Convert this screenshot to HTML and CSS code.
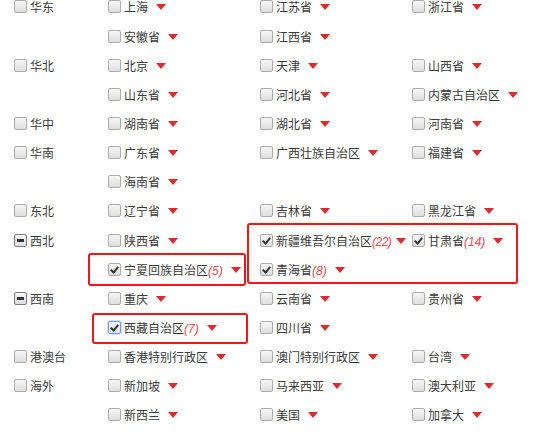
FILE: index.html
```html
<!DOCTYPE html>
<html lang="zh-CN">
<head>
    <meta charset="UTF-8">
    <meta name="viewport" content="width=device-width, initial-scale=1.0">
    <title>地区选择</title>
    <link rel="stylesheet" href="styles.css">
</head>
<body>
    <div class="area-list">
        <div class="area">
            <label class="region"><input type="checkbox"><span>华东</span></label>
            <div class="provinces">
                <label class="prov"><input type="checkbox"><span>上海</span><i class="arrow"></i></label>
                <label class="prov"><input type="checkbox"><span>江苏省</span><i class="arrow"></i></label>
                <label class="prov"><input type="checkbox"><span>浙江省</span><i class="arrow"></i></label>
                <label class="prov"><input type="checkbox"><span>安徽省</span><i class="arrow"></i></label>
                <label class="prov"><input type="checkbox"><span>江西省</span><i class="arrow"></i></label>
            </div>
        </div>
        <div class="area">
            <label class="region"><input type="checkbox"><span>华北</span></label>
            <div class="provinces">
                <label class="prov"><input type="checkbox"><span>北京</span><i class="arrow"></i></label>
                <label class="prov"><input type="checkbox"><span>天津</span><i class="arrow"></i></label>
                <label class="prov"><input type="checkbox"><span>山西省</span><i class="arrow"></i></label>
                <label class="prov"><input type="checkbox"><span>山东省</span><i class="arrow"></i></label>
                <label class="prov"><input type="checkbox"><span>河北省</span><i class="arrow"></i></label>
                <label class="prov"><input type="checkbox"><span>内蒙古自治区</span><i class="arrow"></i></label>
            </div>
        </div>
        <div class="area">
            <label class="region"><input type="checkbox"><span>华中</span></label>
            <div class="provinces">
                <label class="prov"><input type="checkbox"><span>湖南省</span><i class="arrow"></i></label>
                <label class="prov"><input type="checkbox"><span>湖北省</span><i class="arrow"></i></label>
                <label class="prov"><input type="checkbox"><span>河南省</span><i class="arrow"></i></label>
            </div>
        </div>
        <div class="area">
            <label class="region"><input type="checkbox"><span>华南</span></label>
            <div class="provinces">
                <label class="prov"><input type="checkbox"><span>广东省</span><i class="arrow"></i></label>
                <label class="prov"><input type="checkbox"><span>广西壮族自治区</span><i class="arrow"></i></label>
                <label class="prov"><input type="checkbox"><span>福建省</span><i class="arrow"></i></label>
                <label class="prov"><input type="checkbox"><span>海南省</span><i class="arrow"></i></label>
            </div>
        </div>
        <div class="area">
            <label class="region"><input type="checkbox"><span>东北</span></label>
            <div class="provinces">
                <label class="prov"><input type="checkbox"><span>辽宁省</span><i class="arrow"></i></label>
                <label class="prov"><input type="checkbox"><span>吉林省</span><i class="arrow"></i></label>
                <label class="prov"><input type="checkbox"><span>黑龙江省</span><i class="arrow"></i></label>
            </div>
        </div>
        <div class="area">
            <label class="region"><input type="checkbox" class="part"><span>西北</span></label>
            <div class="provinces">
                <label class="prov"><input type="checkbox"><span>陕西省</span><i class="arrow"></i></label>
                <label class="prov prov-long"><input type="checkbox" checked><span>新疆维吾尔自治区<em>(22)</em></span><i class="arrow"></i></label>
                <label class="prov"><input type="checkbox" checked><span>甘肃省<em>(14)</em></span><i class="arrow"></i></label>
                <label class="prov"><input type="checkbox" checked><span>宁夏回族自治区<em>(5)</em></span><i class="arrow"></i></label>
                <label class="prov"><input type="checkbox" checked><span>青海省<em>(8)</em></span><i class="arrow"></i></label>
            </div>
        </div>
        <div class="area">
            <label class="region"><input type="checkbox" class="part"><span>西南</span></label>
            <div class="provinces">
                <label class="prov"><input type="checkbox"><span>重庆</span><i class="arrow"></i></label>
                <label class="prov"><input type="checkbox"><span>云南省</span><i class="arrow"></i></label>
                <label class="prov"><input type="checkbox"><span>贵州省</span><i class="arrow"></i></label>
                <label class="prov"><input type="checkbox" class="focus" checked><span>西藏自治区<em>(7)</em></span><i class="arrow"></i></label>
                <label class="prov"><input type="checkbox"><span>四川省</span><i class="arrow"></i></label>
            </div>
        </div>
        <div class="area">
            <label class="region"><input type="checkbox"><span>港澳台</span></label>
            <div class="provinces">
                <label class="prov"><input type="checkbox"><span>香港特别行政区</span><i class="arrow"></i></label>
                <label class="prov"><input type="checkbox"><span>澳门特别行政区</span><i class="arrow"></i></label>
                <label class="prov"><input type="checkbox"><span>台湾</span><i class="arrow"></i></label>
            </div>
        </div>
        <div class="area">
            <label class="region"><input type="checkbox"><span>海外</span></label>
            <div class="provinces">
                <label class="prov"><input type="checkbox"><span>新加坡</span><i class="arrow"></i></label>
                <label class="prov"><input type="checkbox"><span>马来西亚</span><i class="arrow"></i></label>
                <label class="prov"><input type="checkbox"><span>澳大利亚</span><i class="arrow"></i></label>
                <label class="prov"><input type="checkbox"><span>新西兰</span><i class="arrow"></i></label>
                <label class="prov"><input type="checkbox"><span>美国</span><i class="arrow"></i></label>
                <label class="prov"><input type="checkbox"><span>加拿大</span><i class="arrow"></i></label>
            </div>
        </div>

        <!-- annotation boxes -->
        <div class="mark mark-nx"></div>
        <div class="mark mark-xz"></div>
        <div class="mark mark-xj"></div>
    </div>
</body>
</html>
```

FILE: styles.css
```css
* {
    margin: 0;
    padding: 0;
    box-sizing: border-box;
}

body {
    background: #fff;
    font-family: "Noto Sans CJK SC", "Noto Sans", sans-serif;
    font-size: 12px;
    color: #3a3a3a;
    overflow: hidden;
}

.area-list {
    position: relative;
    margin-top: -7.6px;
    padding-left: 14px;
}

.area {
    display: grid;
    grid-template-columns: 94px 1fr;
    align-items: start;
}

.region,
.prov {
    display: flex;
    align-items: center;
    height: 29.15px;
    white-space: nowrap;
}

.provinces {
    display: grid;
    grid-template-columns: 152px 152px auto;
}

input[type="checkbox"] {
    appearance: none;
    -webkit-appearance: none;
    position: relative;
    width: 13px;
    height: 13px;
    margin: 0 3px 0 0;
    border: 1px solid #ababab;
    border-radius: 2px;
    background: linear-gradient(#f6f6f6, #dedede);
    flex-shrink: 0;
}

input[type="checkbox"]:checked::after {
    content: "";
    position: absolute;
    left: 3px;
    top: 1px;
    width: 3px;
    height: 6px;
    border: solid #333;
    border-width: 0 2px 2px 0;
    transform: rotate(40deg);
}

input.part {
    border-color: #7a7a7a;
}

input.part::after {
    content: "";
    position: absolute;
    left: 2px;
    top: 4px;
    width: 7px;
    height: 3px;
    background: #333;
}

input.focus {
    border-color: #6f9be0;
    box-shadow: 0 0 0 1px rgba(120, 160, 230, 0.35);
}

.prov em {
    font-style: italic;
    color: #e04a55;
    font-family: "Liberation Sans", sans-serif;
}

.prov-long em {
    letter-spacing: -0.5px;
}

.arrow {
    display: inline-block;
    margin-left: 8px;
    margin-top: 1px;
    border-left: 5px solid transparent;
    border-right: 5px solid transparent;
    border-top: 6px solid #dd2a2a;
}

.prov-long .arrow {
    margin-left: 5px;
}

.mark {
    position: absolute;
    border: 2px solid #f4141a;
    border-radius: 3px;
}

.mark-nx {
    left: 88px;
    top: 260.6px;
    width: 158px;
    height: 33px;
}

.mark-xz {
    left: 92px;
    top: 320.6px;
    width: 156px;
    height: 31px;
}

.mark-xj {
    left: 247px;
    top: 230.6px;
    width: 271px;
    height: 61px;
}
```
